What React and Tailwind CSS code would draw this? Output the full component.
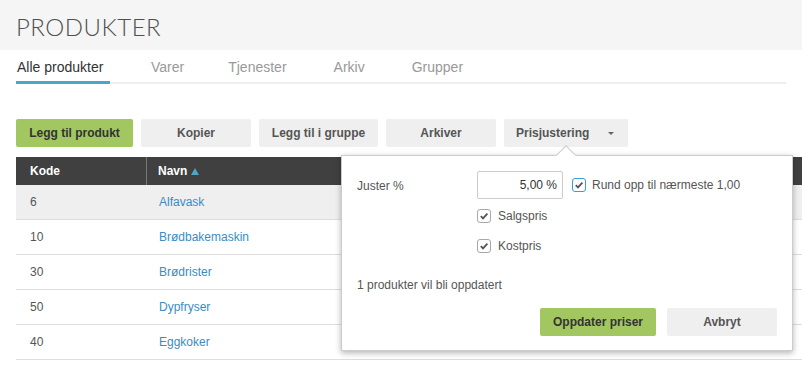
import { useState } from "react";

const tabs = ["Alle produkter", "Varer", "Tjenester", "Arkiv", "Grupper"];

const rows = [
  { kode: "6", navn: "Alfavask" },
  { kode: "10", navn: "Brødbakemaskin" },
  { kode: "30", navn: "Brødrister" },
  { kode: "50", navn: "Dypfryser" },
  { kode: "40", navn: "Eggkoker" },
];

function Check({ checked, onChange, active }) {
  return (
    <button
      type="button"
      onClick={onChange}
      className={`w-[14px] h-[14px] rounded-[3px] border bg-white flex items-center justify-center ${
        active ? "border-[#3a9bd5]" : "border-[#a8a8a8]"
      }`}
    >
      {checked && (
        <svg width="10" height="10" viewBox="0 0 10 10">
          <path d="M1.8 5.2 L4 7.4 L8.4 2.6" fill="none" stroke="#555" strokeWidth="1.8" />
        </svg>
      )}
    </button>
  );
}

export default function App() {
  const [tab, setTab] = useState(0);
  const [round, setRound] = useState(true);
  const [salg, setSalg] = useState(true);
  const [kost, setKost] = useState(true);

  return (
    <div className="w-[802px] h-[368px] bg-white overflow-hidden font-['Liberation_Sans',Arial,sans-serif] text-[12px] text-[#555]">
      {/* header */}
      <div className="bg-[#f5f5f5] h-[50px] px-4 pt-[12px]">
        <h1 className="font-['Lato',sans-serif] font-light text-[24px] leading-[30px] tracking-[0.5px] text-[#505050]">
          PRODUKTER
        </h1>
      </div>

      {/* tabs */}
      <div className="mx-4 border-b-2 border-[#eee] flex h-[34px] items-end">
        {tabs.map((t, i) => (
          <button
            key={t}
            onClick={() => setTab(i)}
            className={`text-[14px] h-[34px] pt-[3px] -mb-[2px] border-b-[3px] px-[1px] ${
              i === tab ? "border-[#4aa7c7] text-[#333]" : "border-transparent text-[#999]"
            } ${i === 0 ? "w-[94px] text-left" : ""} ${
              i === 1 ? "ml-[40px]" : i === 2 ? "ml-[42px]" : i === 3 ? "ml-[45px]" : i === 4 ? "ml-[45px]" : ""
            }`}
          >
            {t}
          </button>
        ))}
      </div>

      {/* toolbar */}
      <div className="flex gap-2 px-4 mt-[35px]">
        <button className="h-[28px] w-[117px] rounded-[2px] bg-[#a2c760] font-bold text-[#333]">
          Legg til produkt
        </button>
        <button className="h-[28px] w-[110px] rounded-[2px] bg-[#efefef] font-bold">Kopier</button>
        <button className="h-[28px] w-[119px] rounded-[2px] bg-[#efefef] font-bold">Legg til i gruppe</button>
        <button className="h-[28px] w-[110px] rounded-[2px] bg-[#efefef] font-bold">Arkiver</button>
        <div className="relative">
          <button className="h-[28px] w-[124px] rounded-[2px] bg-[#efefef] font-bold flex items-center pl-[12px]">
            Prisjustering
            <span className="ml-[19px] w-0 h-0 border-l-[3px] border-r-[3px] border-t-[3px] border-l-transparent border-r-transparent border-t-[#666]" />
          </button>

          {/* popover */}
          <div className="absolute left-[-163px] top-[36px] w-[452px] h-[196px] bg-white border border-[#ccc] shadow-[0_2px_6px_rgba(0,0,0,0.3)] z-10 px-[15px] pt-[15px]">
            <div className="absolute left-[217px] -top-[8px] w-[14px] h-[14px] bg-white border-l border-t border-[#ccc] rotate-45" />
            <div className="flex">
              <div className="w-[120px] pt-[6px]">Juster %</div>
              <div className="flex flex-col">
                <div className="flex items-center gap-[9px]">
                  <input
                    defaultValue="5,00 %"
                    className="w-[86px] h-[28px] border border-[#ccc] rounded-[2px] text-right pr-[5px] text-[12px] text-[#333] outline-none"
                  />
                  <div className="flex items-center gap-[6px]">
                    <Check checked={round} onChange={() => setRound(!round)} active />
                    <span>Rund opp til nærmeste 1,00</span>
                  </div>
                </div>
                <div className="flex items-center gap-[7px] h-[16px] mt-[9px]">
                  <Check checked={salg} onChange={() => setSalg(!salg)} />
                  <span>Salgspris</span>
                </div>
                <div className="flex items-center gap-[7px] h-[16px] mt-[14px]">
                  <Check checked={kost} onChange={() => setKost(!kost)} />
                  <span>Kostpris</span>
                </div>
              </div>
            </div>
            <div className="mt-[23px] leading-[16px] text-[#555]">1 produkter vil bli oppdatert</div>
            <div className="flex justify-end gap-[11px] mt-[15px]">
              <button className="h-[28px] w-[116px] rounded-[2px] bg-[#a2c760] font-bold text-[#333]">
                Oppdater priser
              </button>
              <button className="h-[28px] w-[110px] rounded-[2px] bg-[#efefef] font-bold">Avbryt</button>
            </div>
          </div>
        </div>
      </div>

      {/* table */}
      <div className="ml-4 mt-[10px]">
        <div className="flex h-[28px] bg-[#404040] text-white font-bold items-center">
          <div className="w-[131px] pl-[14px] h-full flex items-center border-r border-[#777]">Kode</div>
          <div className="pl-[11px] flex items-center gap-[4px]">
            Navn
            <span className="w-0 h-0 border-l-[4px] border-r-[4px] border-b-[7px] border-l-transparent border-r-transparent border-b-[#4aa7c7]" />
          </div>
        </div>
        {rows.map((r, i) => (
          <div
            key={r.kode}
            className={`flex h-[35px] items-center border-b border-[#ddd] ${i === 0 ? "bg-[#efefef]" : ""}`}
          >
            <div className="w-[131px] pl-[14px]">{r.kode}</div>
            <div className="pl-[12px] text-[#3a8cc4]">{r.navn}</div>
          </div>
        ))}
      </div>
    </div>
  );
}
